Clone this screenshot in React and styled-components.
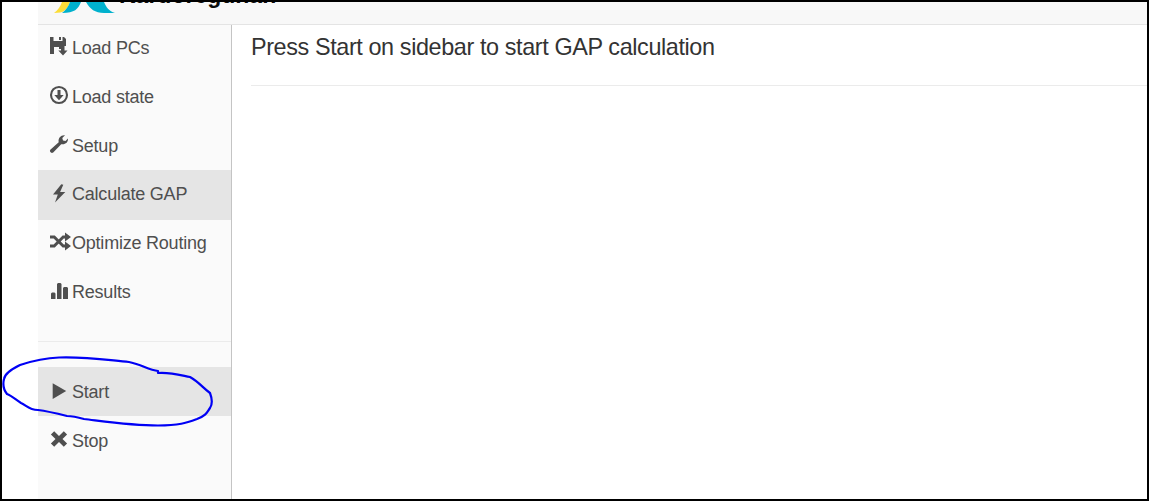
import React from 'react';
import styled, { createGlobalStyle } from 'styled-components';

const Global = createGlobalStyle`
  * { box-sizing: border-box; }
  body { margin: 0; background: #fff; font-family: "Liberation Sans", Arial, sans-serif; }
`;
const Frame = styled.div`
  position: relative;
  height: 501px;
  border: 2px solid #000;
  padding-left: 36px;
  display: flex;
  flex-direction: column;
  overflow: hidden;
`;
const Header = styled.header`
  height: 23px;
  flex: none;
  display: flex;
  align-items: flex-end;
  background: #f8f8f8;
  border-bottom: 1px solid #e4e4e4;
  overflow: hidden;
`;
const Logo = styled.svg`
  width: 81px;
  height: 22px;
  flex: none;
  display: block;
`;
const Brand = styled.div`
  font-size: 23px;
  line-height: 25px;
  font-weight: 700;
  color: #0c0c0c;
  white-space: nowrap;
  padding-bottom: 16px;
`;
const Body = styled.div`
  flex: 1;
  display: flex;
`;
const Sidebar = styled.nav`
  width: 194px;
  flex: none;
  background: #fafafa;
  border-right: 1px solid #c4c4c4;
  display: flex;
  flex-direction: column;
`;
const Item = styled.a`
  height: ${(p) => p.$h || 49}px;
  flex: none;
  display: flex;
  align-items: center;
  padding: 0 0 ${(p) => p.$lift || 0}px 10px;
  font-size: 18px;
  letter-spacing: -0.22px;
  line-height: 24px;
  white-space: nowrap;
  color: #4f4f4f;
  background: ${(p) => (p.$active ? '#e5e5e5' : 'transparent')};
`;
const Icon = styled.svg`
  width: 24px;
  height: 20px;
  margin: 0 0 ${(p) => p.$gap}px 0;
  flex: none;
  display: block;
  fill: #4f4f4f;
`;
const Divider = styled.hr`
  width: 100%;
  height: 1px;
  border: 0;
  background: #ebebeb;
  margin: ${(p) => p.$m};
`;
const Content = styled.main`
  flex: 1;
  padding: 7px 0 0 19px;
`;
const Title = styled.h1`
  margin: 0;
  font-size: 23.4px;
  letter-spacing: -0.39px;
  line-height: 30px;
  font-weight: 400;
  color: #333;
  white-space: nowrap;
`;
const Annotation = styled.svg`
  position: absolute;
  left: -2px;
  top: 348px;
  width: 220px;
  height: 82px;
  fill: none;
  stroke: #0000f5;
  stroke-width: 2.2;
  stroke-linejoin: round;
`;

const icons = {
  save: (
    <path d="M2 1h3.500v4h9V1h1.500l2 2v7h-5v3h-2v-2H6v7H2zM11 1h2v3h-2zM13 10h3.500v4.500h3L15 19.500l-4.700-5H13z" />
  ),
  download: (
    <>
      <circle cx="11" cy="10" r="8" fill="none" stroke="#4f4f4f" strokeWidth="2.100" />
      <path d="M9.500 5h3v5h3.200L11 15.200 6.300 10h3.200z" />
    </>
  ),
  wrench: (
    <path d="M2.300 15.800 10.700 8.200C9.900 4 13 .8 17 1.300L14.300 4l.7 2.600 2.500.5L20 4.600c.4 4-3 6.400-6.800 5.600L5.200 18.500c-1.900 1.300-4.200-.9-2.900-2.700z" />
  ),
  bolt: <path d="M13.300 1.200 5 11.600h4.800L7 19.600 17.300 8.900h-5.200L15.300 1.800z" />,
  shuffle: (
    <>
      <path d="M2 5h4.200l9 9H19M2 14h4.200l9-9H19" fill="none" stroke="#4f4f4f" strokeWidth="2.900" />
      <path d="M17 .5 23 5 17 9.500zM17 9.500l6 4.500-6 4.500z" />
    </>
  ),
  bars: (
    <path d="M3 12.500l1-1h2.500l1 1V18H3zM9 3l1-1h2.500l1 1v15H9zM15 7l1-1h3l1 1v11h-5z" />
  ),
  play: <path d="M4.700 2.200v15.800L18.200 10z" />,
  cross: (
    <path d="M6.200 2.200 11 7l4.800-4.800 3.300 3.300L14.500 10l4.600 4.500-3.300 3.300L11 13l-4.800 4.800-3.300-3.300L7.500 10 2.900 5.500z" />
  ),
};

const NavItem = ({ icon, label, gap = 4, ...rest }) => (
  <Item {...rest}>
    <Icon viewBox="0 0 24 20" $gap={gap}>{icons[icon]}</Icon>
    {label}
  </Item>
);

export default function App() {
  return (
    <>
      <Global />
      <Frame>
        <Header>
          <Logo viewBox="0 0 81 22">
            <path d="M24 0h8c-3 8-6 11-16 11 4-3 6-6 8-11z" fill="#fbdd38" />
            <path d="M32 0h11c-3 7-6 11-19 11 4-3 6-6 8-11zM48 0h18c2 5 5 9 11 11H66C57 11 52 7 48 0z" fill="#00b1cd" />
          </Logo>
          <Brand>Kardoregunan</Brand>
        </Header>
        <Body>
          <Sidebar>
            <NavItem icon="save" label="Load PCs" $h={47} $lift={1} />
            <NavItem icon="download" label="Load state" gap={3} />
            <NavItem icon="wrench" label="Setup" />
            <NavItem icon="bolt" label="Calculate GAP" gap={1} $h={50} $lift={3} $active />
            <NavItem icon="shuffle" label="Optimize Routing" gap={2} $h={48} $lift={2} />
            <NavItem icon="bars" label="Results" gap={2} $lift={2} />
            <Divider $m="24px 0 25px" />
            <NavItem icon="play" label="Start" gap={1} $active />
            <NavItem icon="cross" label="Stop" />
          </Sidebar>
          <Content>
            <Title>Press Start on sidebar to start GAP calculation</Title>
            <Divider $m="23px 0 0" />
          </Content>
        </Body>
        <Annotation viewBox="0 350 220 82">
          <path d="M4 379C5 373 12 369 20 365C32 361 44 358 59 357.500C84 356.500 107 360 129 362C140 364 149 370 158 371V373C170 372 180 375 190 377C199 382 203 388 210 393C213 401 212 405 210 408C207 412 207 415 197 419C186 423 179 425.500 158 425.500C133 425.500 109 422 84 419C77 417 73 416 67 416C55 413 46 411 38 410C29 410 26 405 21 403C16 400 12 396 7 394C3 389 3 383 4 379Z" />
        </Annotation>
      </Frame>
    </>
  );
}
